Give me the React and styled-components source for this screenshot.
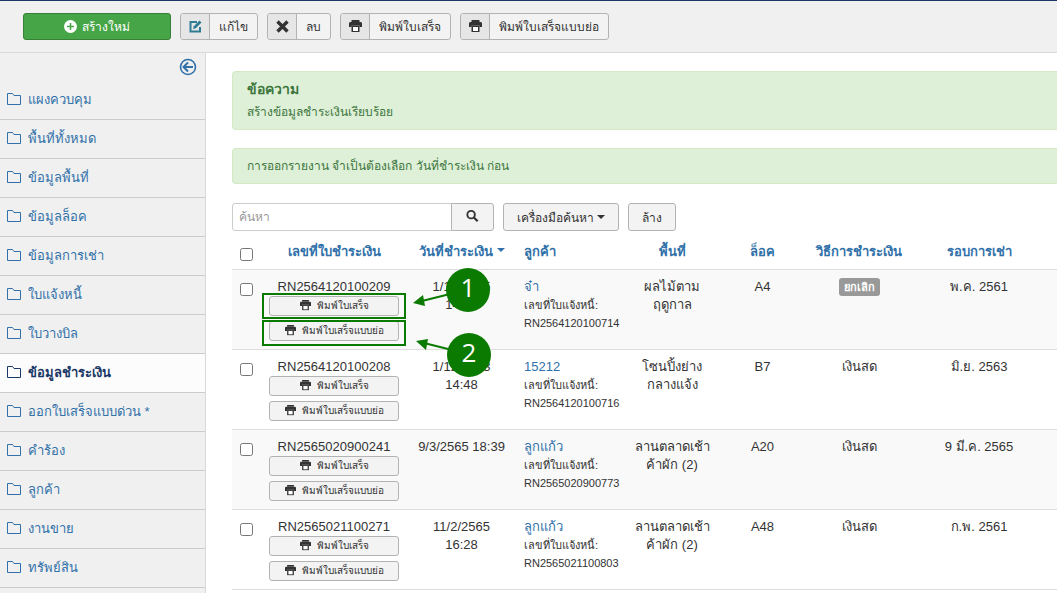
import React from 'react';
import styled, { createGlobalStyle } from 'styled-components';

const GlobalStyle = createGlobalStyle`
  * { box-sizing: border-box; }
  body {
    margin: 0;
    background: #fff;
    color: #333;
    font-family: "Liberation Sans", "Noto Sans", sans-serif;
    font-size: 13px;
    line-height: 18px;
  }
  button, input { font-family: inherit; }
`;

const Page = styled.div`
  display: flex;
  flex-direction: column;
  min-height: 100vh;
  border-top: 1px solid #1a3867;
  overflow: hidden;
`;

const Toolbar = styled.header`
  display: flex;
  gap: 9px;
  padding: 12px 23px;
  background: #f0f0f0;
  border-bottom: 1px solid #d9d9d9;
`;

const NewButton = styled.button`
  display: flex;
  align-items: center;
  justify-content: center;
  gap: 5px;
  width: 148px;
  height: 27px;
  padding: 0;
  color: #fff;
  font-size: 12px;
  background: #46a546;
  border: 1px solid #378137;
  border-radius: 3px;
`;

const ToolButton = styled.button`
  display: flex;
  align-items: stretch;
  height: 27px;
  padding: 0;
  color: #333;
  font-size: 12px;
  line-height: 26px;
  background: #f3f3f3;
  border: 1px solid #b3b3b3;
  border-radius: 3px;
`;

const ToolIcon = styled.span`
  display: flex;
  align-items: center;
  justify-content: center;
  width: 29px;
  color: ${props => props.$color || '#333'};
  background: #e6e6e6;
  border-right: 1px solid #b3b3b3;
  border-radius: 3px 0 0 3px;
`;

const ToolLabel = styled.span`
  padding: 0 9px;
`;

const Body = styled.div`
  display: flex;
  flex: 1;
`;

const Sidebar = styled.nav`
  flex: 0 0 206px;
  background: #f0f0f0;
  border-right: 1px solid #d9d9d9;
`;

const Collapse = styled.button`
  display: block;
  margin: 5px 8px 5px auto;
  padding: 0;
  height: 18px;
  color: #3071a9;
  background: none;
  border: 0;
`;

const MenuLink = styled.a`
  display: flex;
  align-items: center;
  gap: 7px;
  height: 39px;
  padding-left: 7px;
  font-weight: ${props => (props.$active ? 'bold' : 'normal')};
  color: ${props => (props.$active ? '#1a3867' : '#3071a9')};
  background: ${props => (props.$active ? '#fcfcfc' : 'transparent')};
  border-bottom: 1px solid #ccc;
  text-decoration: none;
`;

const Main = styled.main`
  flex: 1;
  min-width: 0;
  padding: 18px 0 0 26px;
`;

const Alert = styled.div`
  margin-bottom: 18px;
  padding: 8px 14px;
  color: #3c763d;
  font-size: 12px;
  background: #dff0d8;
  border: 1px solid #d6e9c6;
  border-right: 0;
  border-radius: 4px 0 0 4px;

  h4 {
    margin: 0 0 5px;
    font-size: 14px;
    line-height: 18px;
  }
`;

const SearchBar = styled.form`
  display: flex;
  align-items: center;
  height: 30px;
  gap: 9px;
`;

const SearchGroup = styled.div`
  display: flex;
`;

const SearchInput = styled.input`
  width: 220px;
  height: 28px;
  padding: 4px 6px;
  font-size: 12px;
  border: 1px solid #ccc;
  border-radius: 3px 0 0 3px;

  &::placeholder { color: #999; }
`;

const FilterButton = styled.button`
  display: flex;
  align-items: center;
  gap: 3px;
  height: 28px;
  padding: 0 13px;
  color: #333;
  font-size: 12px;
  background: #f3f3f3;
  border: 1px solid #b3b3b3;
  border-radius: 3px;
`;

const SearchButton = styled(FilterButton)`
  justify-content: center;
  width: 43px;
  margin-left: -1px;
  border-radius: 0 3px 3px 0;
`;

const TableWrap = styled.div`
  position: relative;
`;

const Table = styled.table`
  width: 100%;
  table-layout: fixed;
  border-collapse: collapse;
`;

const Col = styled.col`
  width: ${props => props.$width};
`;

const Th = styled.th`
  height: 37px;
  padding: ${props => (props.$align ? '11px 8px 7px' : '11px 2px 7px')};
  vertical-align: middle;
  text-align: ${props => props.$align || 'center'};
  white-space: nowrap;

  &:last-child { padding-right: 10px; }

  a {
    color: #3071a9;
    text-decoration: none;
  }
`;

const Caret = styled.span`
  display: inline-block;
  margin-left: ${props => props.$gap || '0'};
  vertical-align: 4px;
  border-top: 4px solid currentColor;
  border-left: 4px solid transparent;
  border-right: 4px solid transparent;
`;

const Row = styled.tr`
  height: 80px;
  background: #fff;
  border-top: 1px solid #ddd;

  &:nth-child(odd) { background: #f9f9f9; }
  &:last-child { border-bottom: 1px solid #ddd; }
`;

const Td = styled.td`
  padding: 8px;
  vertical-align: top;
  text-align: ${props => props.$align || 'center'};
  white-space: pre-line;

  &:last-child { padding-right: 16px; }

  a {
    color: #3071a9;
    text-decoration: none;
  }
`;

const AreaTd = styled(Td)`
  padding: 8px 4px;
`;

const Check = styled.input`
  display: block;
  width: 13px;
  height: 13px;
  margin: 5px auto 0;
`;

const CheckTd = styled(Td)`
  padding: 8px 2px;
`;

const PrintGroup = styled.div`
  display: grid;
  gap: 5px;
`;

const PrintButton = styled.button`
  display: flex;
  align-items: center;
  justify-content: center;
  gap: 6px;
  height: 20px;
  padding: 0;
  color: #333;
  font-size: 10px;
  background: #f3f3f3;
  border: 1px solid #b3b3b3;
  border-radius: 3px;
`;

const Small = styled.div`
  font-size: 11px;
`;

const Badge = styled.span`
  display: inline-block;
  padding: 0 5px;
  color: #fff;
  font-size: 11px;
  font-weight: bold;
  background: #999;
  border-radius: 3px;
`;

const Marks = styled.svg`
  position: absolute;
  top: 0;
  left: 0;
  pointer-events: none;

  text {
    fill: #fff;
    font-family: "Open Sans", sans-serif;
    font-size: 26px;
    font-weight: 500;
    text-anchor: middle;
  }
`;

const menu = [
  'แผงควบคุม', 'พื้นที่ทั้งหมด', 'ข้อมูลพื้นที่', 'ข้อมูลล็อค', 'ข้อมูลการเช่า',
  'ใบแจ้งหนี้', 'ใบวางบิล', 'ข้อมูลชำระเงิน', 'ออกใบเสร็จแบบด่วน *', 'คำร้อง',
  'ลูกค้า', 'งานขาย', 'ทรัพย์สิน',
];

const rows = [
  { no: 'RN2564120100209', date: '1/12/2565\n14:50', customer: 'จ๋า', invoice: 'RN2564120100714', area: 'ผลไม้ตาม\nฤดูกาล', lock: 'A4', pay: 'ยกเลิก', cancelled: true, round: 'พ.ค. 2561' },
  { no: 'RN2564120100208', date: '1/12/2563\n14:48', customer: '15212', invoice: 'RN2564120100716', area: 'โซนปิ้งย่าง\nกลางแจ้ง', lock: 'B7', pay: 'เงินสด', round: 'มิ.ย. 2563' },
  { no: 'RN2565020900241', date: '9/3/2565 18:39', customer: 'ลูกแก้ว', invoice: 'RN2565020900773', area: 'ลานตลาดเช้า\nค้าผัก (2)', lock: 'A20', pay: 'เงินสด', round: '9 มี.ค. 2565' },
  { no: 'RN2565021100271', date: '11/2/2565\n16:28', customer: 'ลูกแก้ว', invoice: 'RN2565021100803', area: 'ลานตลาดเช้า\nค้าผัก (2)', lock: 'A48', pay: 'เงินสด', round: 'ก.พ. 2561' },
];

const Printer = ({ size = 13 }) => (
  <svg width={size} height={size} viewBox="0 0 13 13" fill="currentColor">
    <path d="M2.500 0h8v2h-8z" />
    <path d="M1 2h11l1 1v4h-2.500V5.500h-8V7H0V3z" />
    <path d="M2.500 5.500h8V12h-8z" />
    <path d="M4 7h5v4H4z" fill="#fff" />
  </svg>
);

const Folder = () => (
  <svg width="14" height="14" viewBox="0 0 14 14" fill="none" stroke="currentColor">
    <path d="M.5 11.500V.5h5l1.500 2h6.500v9z" />
  </svg>
);

function App() {
  return (
    <Page>
      <GlobalStyle />
      <Toolbar>
        <NewButton>
          <svg width="13" height="13" viewBox="0 0 13 13">
            <circle cx="6.5" cy="6.5" r="6.5" fill="#fff" />
            <path d="M6.5 3v7M3 6.5h7" stroke="#46a546" strokeWidth="1.5" />
          </svg>
          สร้างใหม่
        </NewButton>
        <ToolButton>
          <ToolIcon $color="#2f7d95">
            <svg width="13" height="13" viewBox="0 0 13 13" fill="none" stroke="currentColor" strokeWidth="2">
              <path d="M8 2H1.500v9.500H11V7" />
              <path d="M4 9l.8-2.800L10.500.5l2 2L6.800 8.200z" fill="currentColor" stroke="none" />
            </svg>
          </ToolIcon>
          <ToolLabel>แก้ไข</ToolLabel>
        </ToolButton>
        <ToolButton>
          <ToolIcon>
            <svg width="13" height="13" viewBox="0 0 13 13" stroke="currentColor" strokeWidth="3.400">
              <path d="M1.500 1.500l10 10M11.500 1.500l-10 10" />
            </svg>
          </ToolIcon>
          <ToolLabel>ลบ</ToolLabel>
        </ToolButton>
        <ToolButton>
          <ToolIcon><Printer /></ToolIcon>
          <ToolLabel>พิมพ์ใบเสร็จ</ToolLabel>
        </ToolButton>
        <ToolButton>
          <ToolIcon><Printer /></ToolIcon>
          <ToolLabel>พิมพ์ใบเสร็จแบบย่อ</ToolLabel>
        </ToolButton>
      </Toolbar>
      <Body>
        <Sidebar>
          <Collapse aria-label="ซ่อนเมนู">
            <svg width="18" height="18" viewBox="0 0 18 18" fill="none" stroke="currentColor" strokeWidth="2">
              <circle cx="9" cy="9" r="7.500" strokeWidth="1.600" />
              <path d="M14 9H5M9 4.500L4.500 9 9 13.500" />
            </svg>
          </Collapse>
          {menu.map(item => (
            <MenuLink key={item} href="#" $active={item === 'ข้อมูลชำระเงิน'}>
              <Folder />
              {item}
            </MenuLink>
          ))}
        </Sidebar>
        <Main>
          <Alert>
            <h4>ข้อความ</h4>
            สร้างข้อมูลชำระเงินเรียบร้อย
          </Alert>
          <Alert>การออกรายงาน จำเป็นต้องเลือก วันที่ชำระเงิน ก่อน</Alert>
          <SearchBar>
            <SearchGroup>
              <SearchInput type="text" placeholder="ค้นหา" aria-label="ค้นหา" />
              <SearchButton type="button" aria-label="ค้นหา">
                <svg width="16" height="16" viewBox="0 0 16 16" fill="none" stroke="currentColor">
                  <circle cx="6.500" cy="5.500" r="4" strokeWidth="2" />
                  <path d="M9.500 8.500l4 4" strokeWidth="2.400" />
                </svg>
              </SearchButton>
            </SearchGroup>
            <FilterButton type="button">เครื่องมือค้นหา <Caret /></FilterButton>
            <FilterButton type="button">ล้าง</FilterButton>
          </SearchBar>
          <TableWrap>
            <Table>
              <colgroup>
                <Col $width="29px" />
                <Col $width="146px" />
                <Col $width="109px" />
                <Col $width="112px" />
                <Col $width="88px" />
                <Col $width="93px" />
                <Col $width="100px" />
                <Col />
              </colgroup>
              <thead>
                <tr>
                  <Th><Check type="checkbox" aria-label="เลือกทั้งหมด" /></Th>
                  <Th><a href="#">เลขที่ใบชำระเงิน</a></Th>
                  <Th><a href="#">วันที่ชำระเงิน<Caret $gap="4px" /></a></Th>
                  <Th $align="left"><a href="#">ลูกค้า</a></Th>
                  <Th><a href="#">พื้นที่</a></Th>
                  <Th><a href="#">ล็อค</a></Th>
                  <Th><a href="#">วิธีการชำระเงิน</a></Th>
                  <Th><a href="#">รอบการเช่า</a></Th>
                </tr>
              </thead>
              <tbody>
                {rows.map(row => (
                  <Row key={row.no}>
                    <CheckTd><Check type="checkbox" aria-label={row.no} /></CheckTd>
                    <Td>
                      {row.no}
                      <PrintGroup>
                        <PrintButton><Printer size={11} />พิมพ์ใบเสร็จ</PrintButton>
                        <PrintButton><Printer size={11} />พิมพ์ใบเสร็จแบบย่อ</PrintButton>
                      </PrintGroup>
                    </Td>
                    <Td>{row.date}</Td>
                    <Td $align="left">
                      <a href="#">{row.customer}</a>
                      <Small>เลขที่ใบแจ้งหนี้:</Small>
                      <Small>{row.invoice}</Small>
                    </Td>
                    <AreaTd>{row.area}</AreaTd>
                    <Td>{row.lock}</Td>
                    <Td>{row.cancelled ? <Badge>{row.pay}</Badge> : row.pay}</Td>
                    <Td>{row.round}</Td>
                  </Row>
                ))}
              </tbody>
            </Table>
            {/* numbered callouts over the two print buttons */}
            <Marks width="270" height="160" viewBox="0 0 270 160">
              <g fill="none" stroke="#0b7a00" strokeWidth="2">
                <path d="M31 62h142v24H31zM31 89h142v24H31z" />
                <path d="M190 69l28-7M192 111l28 7" />
              </g>
              <g fill="#0b7a00">
                <path d="M181 71l10-8 2 11zM184 109l12-2-2 11z" />
                <circle cx="236" cy="58" r="22" />
                <circle cx="237" cy="123" r="22" />
              </g>
              <text x="236" y="65">1</text>
              <text x="237" y="130">2</text>
            </Marks>
          </TableWrap>
        </Main>
      </Body>
    </Page>
  );
}

export default App;
